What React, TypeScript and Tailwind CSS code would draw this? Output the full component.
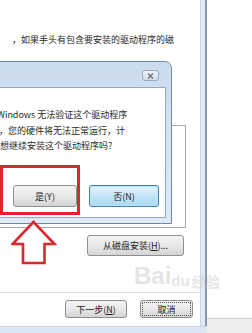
import React from "react";

const font = { fontFamily: '"Noto Sans CJK SC", "Noto Sans", sans-serif' };

const Btn = ({ children, className = "" }: { children: React.ReactNode; className?: string }) => (
  <div
    className={`flex items-center justify-center rounded-[3px] border border-[#8e8f8f] bg-gradient-to-b from-[#f4f4f4] via-[#e9e9e9] to-[#d4d4d4] text-[9px] leading-none text-[#1a1a1a] ${className}`}
  >
    {children}
  </div>
);

const Arrow = () => (
  <svg width="46" height="45" viewBox="0 0 46 45" className="absolute left-[11px] top-[220px]">
    <polygon
      points="22.5,2 43.5,24 33.5,24 33.5,43 12,43 12,24 1.5,24"
      fill="white"
      stroke="#e0262c"
      strokeWidth="2.6"
      strokeLinejoin="miter"
    />
  </svg>
);

export default function App() {
  return (
    <div className="relative flex h-[333px] w-[252px] overflow-hidden bg-white" style={font}>
      {/* main wizard window */}
      <div className="flex h-full w-[207px] flex-col">
        <div className="flex flex-1">
          <div className="flex w-[200px] flex-col bg-white">
            <p className="ml-[12px] mt-[34px] whitespace-nowrap text-[9px] leading-[12px] text-[#2a2a2a]">
              ，如果手头有包含要安装的驱动程序的磁
            </p>
            <div className="ml-[-10px] mt-[79px] h-[103px] w-[196px] border border-[#a7abb0] bg-white" />
            <Btn className="ml-auto mr-[16px] mt-[7px] h-[21px] w-[97px]">
              从磁盘安装(<span className="underline">H</span>)...
            </Btn>
            <div className="mt-[36px] h-px w-full bg-[#e4e4e4]" />
            <div className="mt-[7px] flex gap-[13px] pl-[65px]">
              <Btn className="h-[18px] w-[62px]">
                下一步(<span className="underline">N</span>)
              </Btn>
              <Btn className="h-[18px] w-[53px]">
                <div className="flex h-[14px] w-[49px] items-center justify-center border border-dotted border-[#555]">取消</div>
              </Btn>
            </div>
          </div>
          <div className="w-[7px] border-l border-[#c9d6e4] border-r-2 border-r-[#8597ac] bg-[#e1ebf6]" />
        </div>
        <div className="h-[7px] border-t border-[#c9d6e4] bg-[#dbe6f2]" />
      </div>
      {/* area to the right */}
      <div className="flex flex-1 flex-col">
        <div className="h-[318px] bg-white" />
        <div className="flex-1 border-t border-[#cfcfcf] bg-[#eeeeee]" />
      </div>

      {/* security dialog */}
      <div className="absolute left-[-60px] top-[61px] flex h-[163px] w-[232px] flex-col rounded-tr-[7px] border border-[#7089a8] bg-gradient-to-b from-[#cbdcee] to-[#dfeaf6]">
        <div className="flex h-[25px] items-start justify-end pr-[12px] pt-[8px]">
          <div className="flex h-[11px] w-[17px] items-center justify-center rounded-[3px] border border-[#9aabbf] bg-gradient-to-b from-[#eef3f8] to-[#d3dde9]">
            <svg width="7" height="6" viewBox="0 0 7 6">
              <path d="M1 0.5 L6 5.5 M6 0.5 L1 5.5" stroke="#6d7480" strokeWidth="1.4" />
            </svg>
          </div>
        </div>
        <div className="mb-[5px] mr-[5px] flex flex-1 flex-col border border-[#93a9c2] bg-white">
          <div className="ml-[55px] mt-[19px] text-[9px] leading-[15.5px] text-[#2a2a2a]">
            <p className="whitespace-nowrap">Windows 无法验证这个驱动程序</p>
            <p className="ml-[2px] whitespace-nowrap">，您的硬件将无法正常运行，计</p>
            <p className="ml-[3px] whitespace-nowrap">想继续安装这个驱动程序吗?</p>
          </div>
          <div className="mt-auto mb-[10px] flex justify-end gap-[12px] pr-[6px]">
            <Btn className="h-[22px] w-[64px]">是(Y)</Btn>
            <div className="flex h-[22px] w-[70px] items-center justify-center rounded-[3px] border border-[#3c7fb1] bg-gradient-to-b from-[#e5f4fc] via-[#c4e5f6] to-[#a9d9f2] text-[9px] leading-none text-[#1a1a1a] shadow-[inset_0_0_0_1px_#bfe6fb]">
              否(N)
            </div>
          </div>
        </div>
      </div>

      {/* red highlight box */}
      <div className="absolute left-0 top-[165px] h-[50px] w-[80px] border-[3px] border-[#e0262c]" />
      <Arrow />

      {/* watermark */}
      <div className="pointer-events-none absolute left-[134px] top-[264px] flex items-end opacity-60">
        <span className="text-[24px] font-bold leading-none text-[#d4d4d4]" style={{ fontFamily: '"Liberation Sans", sans-serif' }}>
          Bai
        </span>
        <span className="relative text-[15px] font-bold leading-none text-[#d4d4d4]" style={{ fontFamily: '"Liberation Sans", sans-serif' }}>
          du
        </span>
        <span className="ml-[2px] text-[14px] font-bold leading-none text-[#d4d4d4]">经验</span>
      </div>
    </div>
  );
}
